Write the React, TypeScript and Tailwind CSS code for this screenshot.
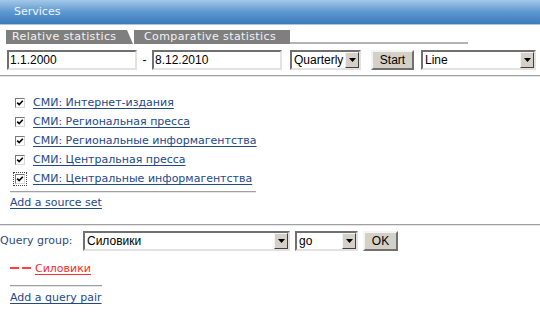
import React from 'react'

const verdana = { fontFamily: '"DejaVu Sans", Verdana, sans-serif' }
const arial = { fontFamily: '"Liberation Sans", Arial, sans-serif' }

const sources = [
  'СМИ: Интернет-издания',
  'СМИ: Региональная пресса',
  'СМИ: Региональные информагентства',
  'СМИ: Центральная пресса',
  'СМИ: Центральные информагентства',
]

function Field({ value, className }: { value: string; className: string }) {
  return (
    <div
      className={`flex h-[20px] items-center border-2 border-t-[#707070] border-l-[#707070] border-r-[#e2e2e2] border-b-[#e2e2e2] bg-white pl-[1px] text-[12px] text-black ${className}`}
      style={arial}
    >
      {value}
    </div>
  )
}

function Select({ value, className }: { value: string; className: string }) {
  return (
    <div
      className={`flex h-[20px] items-stretch border-2 border-t-[#707070] border-l-[#707070] border-r-[#e2e2e2] border-b-[#e2e2e2] bg-white text-[12px] text-black ${className}`}
      style={arial}
    >
      <div className="flex flex-1 items-center overflow-hidden pl-[2px]">{value}</div>
      <div className="flex w-[14px] items-center justify-center border border-t-[#f4f4f4] border-l-[#f4f4f4] border-r-[#404040] border-b-[#404040] bg-[#d4d0c8]">
        <svg width="7" height="4" viewBox="0 0 7 4">
          <path d="M0 0 H7 L3.5 4 Z" fill="#000" />
        </svg>
      </div>
    </div>
  )
}

function Button({ label, className }: { label: string; className: string }) {
  return (
    <div
      className={`flex h-[20px] items-center justify-center border-2 border-t-[#f4f4f4] border-l-[#f4f4f4] border-r-[#707070] border-b-[#707070] bg-[#d4d0c8] text-[12px] text-black ${className}`}
      style={arial}
    >
      {label}
    </div>
  )
}

function Check({ focused }: { focused?: boolean }) {
  return (
    <div className={`flex h-[10px] w-[10px] items-center justify-center border border-t-[#7a7a7a] border-l-[#7a7a7a] border-r-[#d8d8d8] border-b-[#d8d8d8] bg-white ${focused ? 'outline outline-1 outline-offset-1 outline-dotted outline-[#444]' : ''}`}>
      <svg width="8" height="8" viewBox="0 0 8 8">
        <path d="M1.2 3.6 L3.2 5.6 L6.8 1.8" fill="none" stroke="#000" strokeWidth="1.6" />
      </svg>
    </div>
  )
}

function Rule({ className }: { className: string }) {
  return <div className={`h-[2px] border-t border-t-[#a0a0a0] border-b border-b-[#e6e6e6] ${className}`} />
}

export default function App() {
  return (
    <div className="flex h-[324px] w-[540px] flex-col overflow-hidden bg-white" style={verdana}>
      {/* header */}
      <div className="flex h-[25px] items-center border-b border-b-[#a9c7e4] bg-gradient-to-b from-[#a4c8e8] via-[#5c98d0] to-[#3c7abb] pl-[14px] text-[11px] text-[#eef4fa]">
        Services
      </div>

      {/* tabs */}
      <div className="mt-[5px] flex h-[14px] items-stretch pl-[6px] text-[11px] tracking-[0.4px] text-[#f2f2f2]">
        <div className="flex w-[127px] items-center bg-[#7f7f7f] pl-[6px] [clip-path:polygon(0_0,calc(100%-6px)_0,100%_100%,0_100%)]">
          Relative statistics
        </div>
        <div className="ml-[1px] flex w-[156px] items-center bg-[#7f7f7f] pl-[10px]">Comparative statistics</div>
        <div className="w-[178px] border-b-2 border-b-[#b4b4b4]" />
      </div>

      {/* date row */}
      <div className="mt-[6px] flex items-center">
        <Field value="1.1.2000" className="ml-[7px] w-[130px]" />
        <div className="w-[15px] text-center text-[12px] text-black" style={arial}>-</div>
        <Field value="8.12.2010" className="w-[130px]" />
        <Select value="Quarterly" className="ml-[8px] w-[71px]" />
        <Button label="Start" className="ml-[10px] w-[43px]" />
        <Select value="Line" className="ml-[7px] w-[115px]" />
      </div>

      <Rule className="mt-[5px] w-full" />

      {/* sources */}
      <div className="mt-[16px] flex flex-col pl-[15px]">
        {sources.map((s, i) => (
          <div key={s} className="flex h-[19px] items-center gap-[8px]">
            <Check focused={i === sources.length - 1} />
            <span className="text-[11px] leading-none text-[#23498a] underline underline-offset-2">{s}</span>
          </div>
        ))}
      </div>
      <Rule className="ml-[10px] mt-[3px] w-[246px]" />
      <div className="ml-[10px] mt-[3px] text-[11px] leading-[14px] text-[#23498a] underline underline-offset-2">
        Add a source set
      </div>

      <Rule className="mt-[14px] w-full" />

      {/* query group */}
      <div className="mt-[5px] flex items-center">
        <div className="w-[83px] text-[11px] text-[#2b4c7c]">Query group:</div>
        <Select value="Силовики" className="w-[207px]" />
        <Select value="go" className="ml-[5px] w-[63px]" />
        <Button label="OK" className="ml-[5px] w-[35px]" />
      </div>

      <div className="ml-[10px] mt-[10px] flex h-[14px] items-center gap-[4px]">
        <div className="flex w-[21px] justify-between">
          <div className="h-[2px] w-[9px] bg-[#ff4040]" />
          <div className="h-[2px] w-[9px] bg-[#ff4040]" />
        </div>
        <span className="text-[11px] leading-none text-[#ff2a2a] underline underline-offset-2">Силовики</span>
      </div>
      <Rule className="ml-[10px] mt-[10px] w-[92px]" />
      <div className="ml-[10px] mt-[4px] text-[11px] leading-[14px] text-[#23498a] underline underline-offset-2">
        Add a query pair
      </div>
    </div>
  )
}
